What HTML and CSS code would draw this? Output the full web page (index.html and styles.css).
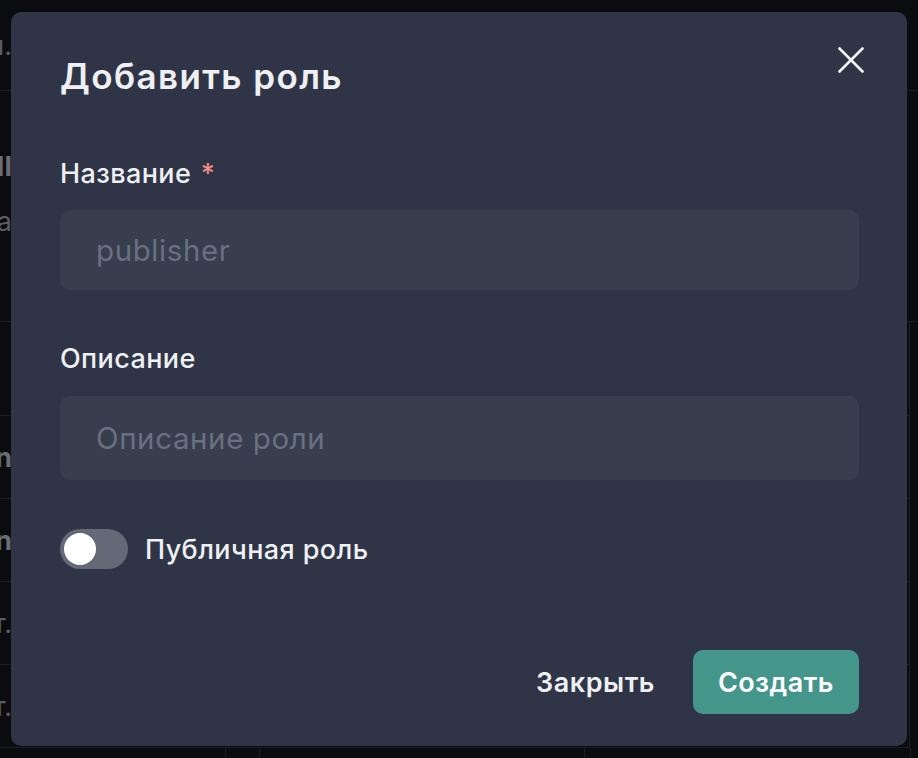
FILE: index.html
```html
<!DOCTYPE html>
<html lang="ru">
<head>
<meta charset="utf-8">
<title>Добавить роль</title>
<link rel="stylesheet" href="styles.css">
</head>
<body>
<div class="page">
  <div class="row r0"><div class="cell-l"><span class="bg-text">Роли.</span></div></div>
  <div class="row r1">
    <div class="cell-l col"><span class="bg-text strong t1">ИМЯ II</span><span class="bg-text t2">Роль a</span></div>
    <div class="cell-r"><span class="bg-text t3">Нн</span></div>
  </div>
  <div class="row r2 grid"></div>
  <div class="row r3 grid"><div class="cell-l"><span class="bg-text strong">admin</span></div></div>
  <div class="row r3 grid"><div class="cell-l"><span class="bg-text strong">admin</span></div></div>
  <div class="row r3 grid"><div class="cell-l"><span class="bg-text">т.</span></div></div>
  <div class="row r3 grid"><div class="cell-l"><span class="bg-text">т.</span></div></div>
  <div class="row r4">
    <div class="vcol v1"></div><div class="vcol v2"></div><div class="vcol v3"></div><div class="vcol v4"></div>
  </div>
</div>

<div class="modal" role="dialog" aria-label="Добавить роль">
  <header class="modal-header">Добавить роль</header>
  <button class="close" aria-label="Закрыть">
    <svg width="26" height="26" viewBox="0 0 26 26"><path d="M1.5 1.5 L24.5 24.5 M24.5 1.5 L1.5 24.5" stroke="#f2f3f5" stroke-width="2.6" stroke-linecap="round" fill="none"/></svg>
  </button>
  <div class="modal-body">
    <label class="label first">Название <span class="req">*</span></label>
    <div class="input"><span class="ph">publisher</span></div>
    <label class="label second">Описание</label>
    <div class="input tall"><span class="ph">Описание роли</span></div>
    <div class="switch-row">
      <span class="switch"><span class="thumb"></span></span>
      <span class="switch-label">Публичная роль</span>
    </div>
  </div>
  <footer class="modal-footer">
    <button class="btn ghost">Закрыть</button>
    <button class="btn primary">Создать</button>
  </footer>
</div>
</body>
</html>
```

FILE: styles.css
```css
* { box-sizing: border-box; }
html, body {
  margin: 0;
  padding: 0;
  width: 918px;
  height: 758px;
  overflow: hidden;
  background: #0b0c10;
  font-family: Inter, "Noto Sans", "DejaVu Sans", sans-serif;
}
.page {
  display: flex;
  flex-direction: column;
  width: 918px;
  height: 758px;
}
.row {
  display: flex;
  justify-content: space-between;
  border-bottom: 1px solid #1c1e24;
  flex-shrink: 0;
}
.r0 { height: 91px; align-items: center; }
.r1 { height: 231px; }
.r2 { height: 94px; }
.r3 { height: 83px; align-items: center; }
.r4 { flex: 1; border-bottom: none; display: flex; justify-content: flex-start; }
.grid { border-right: 1px solid #1c1e24; width: 910px; }
.cell-l {
  width: 12px;
  display: flex;
  justify-content: flex-end;
  white-space: nowrap;
}
.cell-l.col { flex-direction: column; align-items: flex-end; justify-content: flex-start; }
.cell-r {
  width: 918px;
  padding-left: 907px;
  white-space: nowrap;
  overflow: hidden;
}
.bg-text {
  color: #5a5d64;
  font-size: 27px;
  line-height: 1;
}
.bg-text.strong { font-weight: 700; color: #6a6d73; }
.t1 { margin-top: 62px; }
.t2 { margin-top: 28px; }
.t3 { display: block; margin-top: 119px; }
.vcol { border-right: 1px solid #1c1e24; height: 100%; }
.v1 { width: 226px; }
.v2 { width: 34px; }
.v3 { width: 325px; }
.v4 { width: 326px; }

.modal {
  position: absolute;
  left: 11px;
  top: 12px;
  width: 896px;
  height: 734px;
  background: #2f3546;
  border-radius: 10px;
  padding: 44px 48px 32px 49px;
  display: flex;
  flex-direction: column;
  color: #eef0f3;
}
.modal-header {
  font-size: 35px;
  font-weight: 600;
  line-height: 41px;
  letter-spacing: 1.4px;
}
.close {
  position: absolute;
  top: 28px;
  right: 36px;
  width: 40px;
  height: 40px;
  padding: 0;
  border: none;
  background: transparent;
  display: flex;
  align-items: center;
  justify-content: center;
}
.modal-body {
  display: flex;
  flex-direction: column;
}
.label {
  display: block;
  font-size: 27px;
  font-weight: 500;
  line-height: 40px;
  letter-spacing: 0.4px;
  color: #eef0f3;
}
.label.first { margin-top: 57px; margin-bottom: 16px; }
.label.second { margin-top: 49px; margin-bottom: 17px; }
.req { color: #f08a85; margin-left: 2px; }
.input {
  height: 80px;
  border-radius: 10px;
  background: #383e4e;
  display: flex;
  align-items: center;
  padding-left: 36px;
}
.input.tall { height: 84px; }
.ph {
  font-size: 29.5px;
  letter-spacing: 0.6px;
  color: #687081;
}
.switch-row {
  margin-top: 49px;
  display: flex;
  align-items: center;
  gap: 17px;
}
.switch {
  width: 68px;
  height: 40px;
  border-radius: 20px;
  background: #636977;
  padding: 4px;
  display: flex;
}
.thumb {
  width: 32px;
  height: 32px;
  border-radius: 50%;
  background: #ffffff;
}
.switch-label {
  font-size: 27px;
  font-weight: 500;
  letter-spacing: 0.4px;
  color: #eef0f3;
}
.modal-footer {
  margin-top: auto;
  display: flex;
  justify-content: flex-end;
  gap: 13px;
}
.btn {
  height: 64px;
  border: none;
  border-radius: 10px;
  font-family: Inter, "Noto Sans", sans-serif;
  font-size: 27px;
  font-weight: 600;
  letter-spacing: 0.5px;
  padding: 0 25px;
}
.btn.ghost { background: transparent; color: #eef0f3; }
.btn.primary { background: #44958a; color: #ffffff; }
```
